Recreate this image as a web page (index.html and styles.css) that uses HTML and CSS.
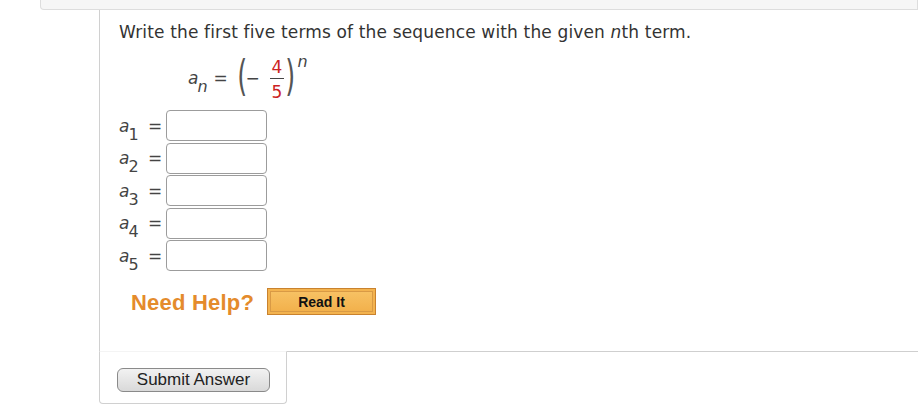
FILE: index.html
```html
<!DOCTYPE html>
<html>
<head>
<meta charset="utf-8">
<link rel="stylesheet" href="styles.css">
</head>
<body>
<div class="topbar"></div>
<div class="question">
  <p class="prompt">Write the first five terms of the sequence with the given <i>n</i>th term.</p>
  <div class="formula">
    <span class="var">a</span><sub class="sub-n">n</sub>
    <span class="eq">=</span>
    <span class="paren"><span class="pg">(</span></span>
    <span class="minus">−</span>
    <span class="frac"><span class="num">4</span><span class="den">5</span></span>
    <span class="paren rp"><span class="pg">)</span></span><sup class="sup-n">n</sup>
  </div>
  <div class="terms">
    <div class="term"><span class="lbl"><span class="var">a</span><sub>1</sub></span><span class="teq">=</span><span class="box"></span></div>
    <div class="term"><span class="lbl"><span class="var">a</span><sub>2</sub></span><span class="teq">=</span><span class="box"></span></div>
    <div class="term"><span class="lbl"><span class="var">a</span><sub>3</sub></span><span class="teq">=</span><span class="box"></span></div>
    <div class="term"><span class="lbl"><span class="var">a</span><sub>4</sub></span><span class="teq">=</span><span class="box"></span></div>
    <div class="term"><span class="lbl"><span class="var">a</span><sub>5</sub></span><span class="teq">=</span><span class="box"></span></div>
  </div>
  <div class="help">
    <span class="need">Need Help?</span>
    <span class="readit"><span class="readit-inner">Read It</span></span>
  </div>
</div>
<div class="submit-tab">
  <button class="submit">Submit Answer</button>
</div>
</body>
</html>
```
FILE: styles.css
```css
html, body {
  margin: 0;
  padding: 0;
  background: #ffffff;
}
body {
  font-family: "DejaVu Sans", Verdana, sans-serif;
  color: #333333;
}
.topbar {
  margin-left: 40px;
  height: 9px;
  background: #f6f6f6;
  border: 1px solid #dddddd;
  border-top: none;
  border-bottom-left-radius: 4px;
}
.question {
  margin-left: 99px;
  height: 342px;
  border-left: 1px solid #d0d0d0;
  border-bottom: 1px solid #cfcfcf;
  padding-left: 19px;
  box-sizing: border-box;
}
.prompt {
  margin: 0;
  padding-top: 12px;
  font-size: 17px;
  line-height: 20px;
  letter-spacing: 0.15px;
}
.prompt i {
  font-style: oblique;
}
.formula {
  display: flex;
  align-items: center;
  height: 44px;
  margin-top: 14px;
  padding-left: 69px;
  font-size: 17px;
  color: #444;
}
.var {
  font-style: oblique;
}
.sub-n {
  font-style: oblique;
  font-size: 16px;
  position: relative;
  top: 8px;
  margin-left: -1px;
  vertical-align: baseline;
}
.eq {
  display: inline-flex;
  justify-content: center;
  width: 10px;
  margin: 0 12px 0 8px;
}
.paren {
  display: inline-flex;
  justify-content: center;
  width: 9px;
  font-size: 17px;
  line-height: 17px;
  color: #555;
}
.pg {
  display: inline-block;
  transform: scale(1.5, 2.5);
  position: relative;
  top: -1px;
}
.minus {
  display: inline-flex;
  justify-content: center;
  width: 10px;
  margin: 0 12px 0 1px;
}
.frac {
  display: inline-flex;
  flex-direction: column;
  align-items: center;
  color: #cc2222;
  font-size: 17px;
  line-height: 19px;
  position: relative;
  top: 2px;
}
.num {
  border-bottom: 1px solid #444;
  padding: 0 2px 1px;
}
.den {
  padding-top: 4px;
}
.rp {
  margin-left: 1px;
}
.sup-n {
  font-style: oblique;
  font-size: 16px;
  position: relative;
  top: -17px;
  margin-left: 3px;
  vertical-align: baseline;
}
.terms {
  display: flex;
  flex-direction: column;
  gap: 1.5px;
  margin-top: 10px;
}
.term {
  display: flex;
  align-items: center;
  height: 31px;
  font-size: 17px;
  color: #444;
}
.lbl {
  width: 29px;
}
.lbl sub {
  font-size: 16px;
  position: relative;
  top: 8px;
  vertical-align: baseline;
  margin-left: -1px;
}
.teq {
  width: 18px;
}
.box {
  width: 99px;
  height: 29px;
  border: 1px solid #9c9c9c;
  border-radius: 4px;
  background: #fff;
}
.help {
  display: flex;
  align-items: center;
  margin-top: 17px;
  padding-left: 12px;
}
.need {
  font-family: "Liberation Sans", Arial, sans-serif;
  font-weight: bold;
  font-size: 22px;
  letter-spacing: 0.2px;
  color: #e48b2c;
  margin-right: 13px;
  position: relative;
  top: 1px;
}
.readit {
  display: inline-flex;
  width: 109px;
  height: 27px;
  box-sizing: border-box;
  background: #f3b34f;
  border: 1px solid #c9822e;
  padding: 2px;
}
.readit-inner {
  flex: 1;
  display: flex;
  align-items: center;
  justify-content: center;
  border: 1px solid #d99a45;
  background: linear-gradient(#f7c163, #f2b14c);
  font-family: "Liberation Sans", Arial, sans-serif;
  font-weight: bold;
  font-size: 14px;
  color: #111;
}
.submit-tab {
  margin-left: 99px;
  margin-top: -1px;
  width: 188px;
  height: 53px;
  box-sizing: border-box;
  border: 1px solid #d0d0d0;
  border-top: 1px solid #f4f4f4;
  border-radius: 0 0 4px 4px;
  background: #fff;
  padding: 16px 0 0 17px;
}
.submit {
  display: block;
  width: 153px;
  height: 24px;
  padding: 0;
  border: 1px solid #8a8a8a;
  border-radius: 6px;
  background: linear-gradient(#f2f2f2, #d9d9d9);
  font-family: "Liberation Sans", Arial, sans-serif;
  font-size: 17px;
  color: #222;
  line-height: 22px;
}
```
